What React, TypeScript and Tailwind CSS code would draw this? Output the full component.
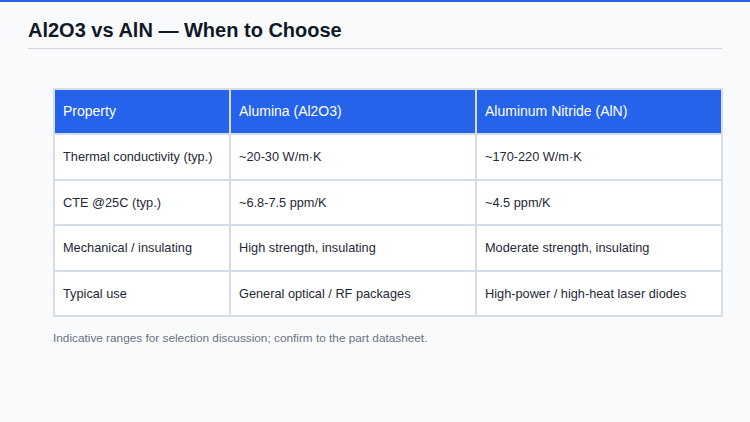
const rows = [
  ['Thermal conductivity (typ.)', '~20-30 W/m·K', '~170-220 W/m·K'],
  ['CTE @25C (typ.)', '~6.8-7.5 ppm/K', '~4.5 ppm/K'],
  ['Mechanical / insulating', 'High strength, insulating', 'Moderate strength, insulating'],
  ['Typical use', 'General optical / RF packages', 'High-power / high-heat laser diodes'],
];

const App = () => {
  return (
    <div className="w-[750px] h-[422px] bg-[#f8fafc] font-['Liberation_Sans',Arial,sans-serif] border-t-2 border-[#2563eb]">
      <div className="px-[28px] pt-[14px]">
        <h1 className="text-[20px] font-bold text-[#111827] leading-[28px]">
          Al2O3 vs AlN — When to Choose
        </h1>
        <div className="mt-[4px] h-[1px] bg-[#d1d5db]" />
      </div>
      <div className="pl-[53px] pr-[28px] pt-[39px]">
        <table className="w-[668px] border-collapse table-fixed text-[12.75px]">
          <colgroup>
            <col className="w-[176px]" />
            <col className="w-[246px]" />
            <col className="w-[246px]" />
          </colgroup>
          <thead>
            <tr className="bg-[#2563eb] text-white text-[14px]">
              <th className="h-[45px] px-[8px] text-left font-normal border-2 border-[#d6dde8]">Property</th>
              <th className="h-[45px] px-[8px] text-left font-normal border-2 border-[#d6dde8]">Alumina (Al2O3)</th>
              <th className="h-[45px] px-[8px] text-left font-normal border-2 border-[#d6dde8]">Aluminum Nitride (AlN)</th>
            </tr>
          </thead>
          <tbody>
            {rows.map((r, i) => (
              <tr key={i} className="bg-white text-[#1f2937]">
                {r.map((c, j) => (
                  <td key={j} className="h-[45.5px] px-[8px] border-2 border-[#d6dde8]">
                    {c}
                  </td>
                ))}
              </tr>
            ))}
          </tbody>
        </table>
        <p className="mt-[13px] text-[11.8px] text-[#6b7280]">
          Indicative ranges for selection discussion; confirm to the part datasheet.
        </p>
      </div>
    </div>
  );
};

export default App;
